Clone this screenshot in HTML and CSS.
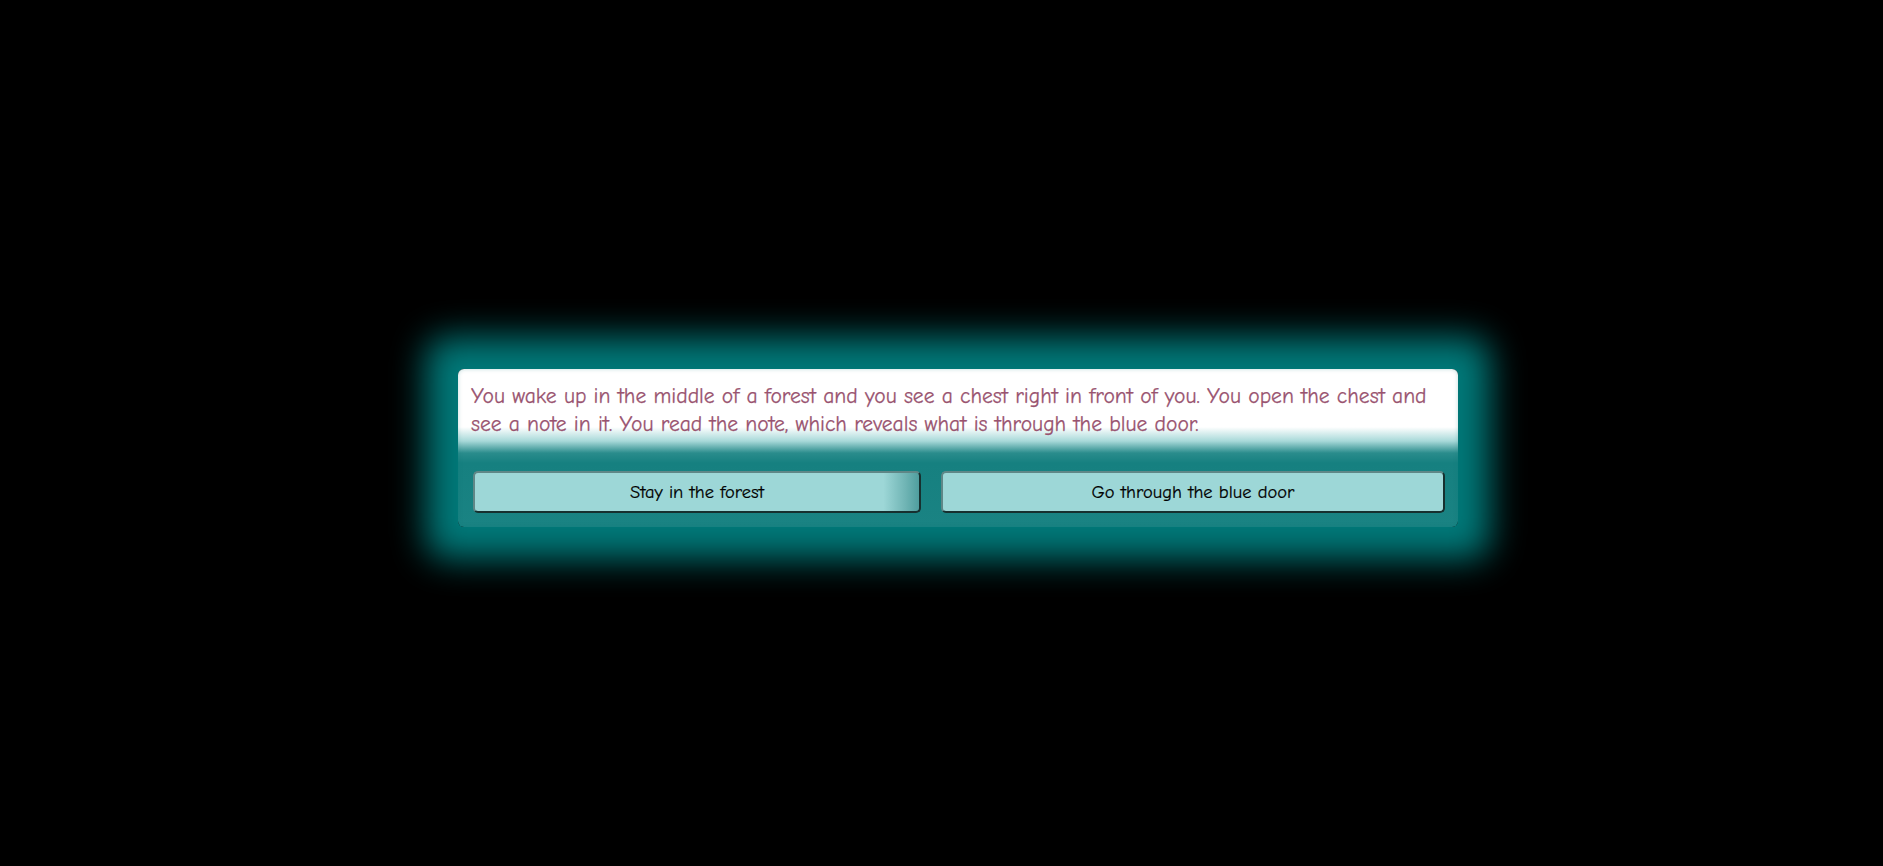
FILE: index.html
```html
<!DOCTYPE html>
<html lang="en">
<head>
<meta charset="utf-8">
<title>Adventure</title>
<link rel="stylesheet" href="styles.css">
</head>
<body>
<main class="stage">
  <section class="card">
    <p class="story">You wake up in the middle of a forest and you see a chest right in front of you. You open the chest and see a note in it. You read the note, which reveals what is through the blue door.</p>
    <div class="choices">
      <button class="choice choice-first">Stay in the forest</button>
      <button class="choice">Go through the blue door</button>
    </div>
  </section>
</main>
</body>
</html>
```
FILE: styles.css
```css
html, body {
  margin: 0;
  padding: 0;
  background: #000;
  height: 100%;
}
.stage {
  padding: 369px 0 0 458px;
}
.card {
  width: 1000px;
  height: 158px;
  box-sizing: border-box;
  border-radius: 6px;
  background: linear-gradient(to bottom, #ffffff 0, #ffffff 58px, #a8d9d9 72px, #2a8c8c 84px, #168080 94px, #1a8383 158px);
  box-shadow: 0 0 34px 32px #007979, inset 0 0 4px rgba(0, 110, 110, 0.25);
  display: flex;
  flex-direction: column;
  font-family: "Comic Sans MS", "Comic Neue", "Open Sans", sans-serif;
}
.story {
  margin: 0;
  padding: 13px 13px 0 13px;
  color: #99536f;
  font-size: 21.6px;
  line-height: 28px;
  height: 88px;
  box-sizing: border-box;
  -webkit-text-stroke: 0.25px #99536f;
}
.choices {
  display: grid;
  grid-template-columns: 448fr 504fr;
  gap: 20px;
  padding: 14px 13px 0 15px;
}
.choice {
  height: 42px;
  box-sizing: border-box;
  border-radius: 5px;
  border: 2px solid;
  border-color: #5f8787 #17302f #17302f #5f8787;
  background: #9dd7d7;
  color: #000;
  font-family: "Comic Sans MS", "Comic Neue", "Open Sans", sans-serif;
  font-size: 18.5px;
  -webkit-text-stroke: 0.2px #000;
  padding: 0;
  cursor: pointer;
}
.choice-first {
  background: linear-gradient(to right, #9dd7d7 0, #9dd7d7 92%, #6fb4b4 97%, #4f9e9e 100%);
}
```
